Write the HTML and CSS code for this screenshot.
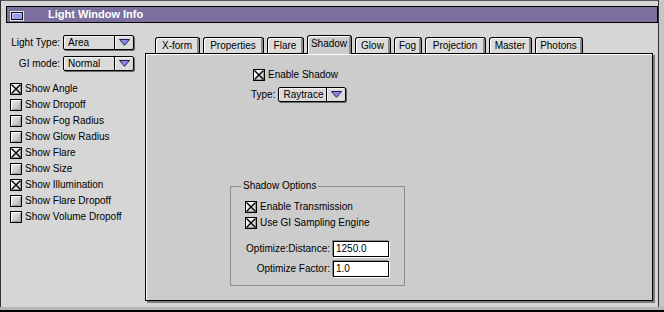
FILE: index.html
```html
<!DOCTYPE html>
<html>
<head>
<meta charset="utf-8">
<link rel="stylesheet" href="styles.css">
</head>
<body>
<div class="window">
  <div class="titlebar">
    <span class="closebox"></span>
    <span class="title">Light Window Info</span>
  </div>
  <div class="body">
    <aside class="sidebar">
      <div class="field-row">
        <span class="lbl">Light Type:</span>
        <div class="popup popup-side">
          <span class="popup-text">Area</span>
          <span class="popup-arrow"><svg width="11" height="7" viewBox="0 0 11 7"><polygon points="0.5,0.5 10.5,0.5 5.5,6.3" fill="#8a8ae6" stroke="#1c1c50" stroke-width="1"/></svg></span>
        </div>
      </div>
      <div class="field-row">
        <span class="lbl">GI mode:</span>
        <div class="popup popup-side">
          <span class="popup-text">Normal</span>
          <span class="popup-arrow"><svg width="11" height="7" viewBox="0 0 11 7"><polygon points="0.5,0.5 10.5,0.5 5.5,6.3" fill="#8a8ae6" stroke="#1c1c50" stroke-width="1"/></svg></span>
        </div>
      </div>
      <ul class="checks">
        <li class="check"><span class="cb on"><svg width="10" height="10" viewBox="0 0 10 10"><path d="M0.5 0.5L9.5 9.5M9.5 0.5L0.5 9.5" stroke="#000" stroke-width="1.4"/></svg></span>Show Angle</li>
        <li class="check"><span class="cb"></span>Show Dropoff</li>
        <li class="check"><span class="cb"></span>Show Fog Radius</li>
        <li class="check"><span class="cb"></span>Show Glow Radius</li>
        <li class="check"><span class="cb on"><svg width="10" height="10" viewBox="0 0 10 10"><path d="M0.5 0.5L9.5 9.5M9.5 0.5L0.5 9.5" stroke="#000" stroke-width="1.4"/></svg></span>Show Flare</li>
        <li class="check"><span class="cb"></span>Show Size</li>
        <li class="check"><span class="cb on"><svg width="10" height="10" viewBox="0 0 10 10"><path d="M0.5 0.5L9.5 9.5M9.5 0.5L0.5 9.5" stroke="#000" stroke-width="1.4"/></svg></span>Show Illumination</li>
        <li class="check"><span class="cb"></span>Show Flare Dropoff</li>
        <li class="check"><span class="cb"></span>Show Volume Dropoff</li>
      </ul>
    </aside>
    <section class="tabs-area">
      <div class="tabs">
        <div class="tab t-xform">X-form</div>
        <div class="tab t-props">Properties</div>
        <div class="tab t-flare">Flare</div>
        <div class="tab t-shadow active">Shadow</div>
        <div class="tab t-glow">Glow</div>
        <div class="tab t-fog">Fog</div>
        <div class="tab t-proj">Projection</div>
        <div class="tab t-master">Master</div>
        <div class="tab t-photons">Photons</div>
      </div>
      <div class="panel">
        <div class="check sh-check"><span class="cb on"><svg width="10" height="10" viewBox="0 0 10 10"><path d="M0.5 0.5L9.5 9.5M9.5 0.5L0.5 9.5" stroke="#000" stroke-width="1.4"/></svg></span>Enable Shadow</div>
        <div class="type-row">
          <span class="lbl">Type:</span>
          <div class="popup popup-type">
            <span class="popup-text">Raytrace</span>
            <span class="popup-arrow"><svg width="11" height="7" viewBox="0 0 11 7"><polygon points="0.5,0.5 10.5,0.5 5.5,6.3" fill="#8a8ae6" stroke="#1c1c50" stroke-width="1"/></svg></span>
          </div>
        </div>
        <fieldset class="group">
          <legend>Shadow Options</legend>
          <div class="check g-check g-first"><span class="cb on"><svg width="10" height="10" viewBox="0 0 10 10"><path d="M0.5 0.5L9.5 9.5M9.5 0.5L0.5 9.5" stroke="#000" stroke-width="1.4"/></svg></span>Enable Transmission</div>
          <div class="check g-check"><span class="cb on"><svg width="10" height="10" viewBox="0 0 10 10"><path d="M0.5 0.5L9.5 9.5M9.5 0.5L0.5 9.5" stroke="#000" stroke-width="1.4"/></svg></span>Use GI Sampling Engine</div>
          <div class="opt-row opt-first">
            <span class="lbl">Optimize:Distance:</span>
            <span class="textfield">1250.0</span>
          </div>
          <div class="opt-row">
            <span class="lbl">Optimize Factor:</span>
            <span class="textfield">1.0</span>
          </div>
        </fieldset>
      </div>
    </section>
  </div>
</div>
</body>
</html>
```

FILE: styles.css
```css
html, body {
  margin: 0;
  padding: 0;
  background: #d6d6d6;
}

body {
  font-family: "Liberation Sans", Arial, sans-serif;
  font-size: 10px;
  line-height: 12px;
  color: #000;
}

.window {
  width: 664px;
  height: 312px;
  box-sizing: border-box;
  background: #d6d6d6;
  display: flex;
  flex-direction: column;
  overflow: hidden;
  box-shadow:
    inset 0 -2px 0 #000,
    inset 0 -5px 0 #b6b6b6,
    inset -5px 0 0 #c6c6c6,
    inset -6px 0 0 #333,
    inset 1px 0 0 #333,
    inset 0 1px 0 #555;
}

/* title bar */
.titlebar {
  margin: 6px 6px 0 6px;
  height: 17px;
  box-sizing: border-box;
  border: 1px solid #000;
  background: #7a6f9f;
  display: flex;
  align-items: flex-start;
  flex: none;
}

.closebox {
  width: 12px;
  height: 8px;
  box-sizing: border-box;
  margin: 5px 0 0 4px;
  border: 1px solid #111;
  background: #9c9cf0;
  box-shadow: 0 0 0 1px #e4e4e4, inset 1px 1px 0 #c8c8ff;
}

.title {
  margin-left: 25px;
  color: #fff;
  font-weight: bold;
  font-size: 11px;
  line-height: 15px;
  white-space: nowrap;
}

/* body */
.body {
  display: flex;
  flex: 1;
}

.sidebar {
  width: 145px;
  flex: none;
  box-sizing: border-box;
  padding: 12px 0 0 10px;
}

.field-row {
  display: flex;
  align-items: center;
  height: 15px;
}

.field-row + .field-row {
  margin-top: 6px;
}

.field-row .lbl {
  width: 50px;
  margin-right: 3px;
  text-align: right;
  white-space: nowrap;
}

/* popup menus */
.popup {
  display: flex;
  height: 15px;
  box-sizing: border-box;
  border: 1px solid #000;
  border-radius: 2px;
  background: #dadada;
  box-shadow: inset 1px 1px 0 #f4f4f4, 1px 1px 0 #6a6a6a;
}

.popup-side {
  width: 71px;
}

.popup-type {
  width: 68px;
  margin-left: 3px;
}

.popup-text {
  flex: 1;
  padding-left: 4px;
  border-right: 1px solid #000;
  line-height: 13px;
  white-space: nowrap;
}

.popup-arrow {
  width: 18px;
  flex: none;
  display: flex;
  align-items: center;
  justify-content: center;
  box-shadow: inset 1px 0 0 #f4f4f4;
}

.popup-arrow svg {
  display: block;
}

/* checkboxes */
.checks {
  list-style: none;
  margin: 12px 0 0 0;
  padding: 0;
}

.check {
  display: flex;
  align-items: center;
  gap: 3px;
  height: 12px;
  margin-bottom: 4px;
  white-space: nowrap;
}

.cb {
  width: 12px;
  height: 12px;
  flex: none;
  box-sizing: border-box;
  border: 1px solid #000;
  background: linear-gradient(135deg, #f0f0f0 0%, #cdcdcd 55%, #a8a8a8 100%);
  box-shadow: inset 1px 1px 0 #fff, inset -1px -1px 0 #9a9a9a;
  display: flex;
  align-items: center;
  justify-content: center;
}

.cb.on {
  background: linear-gradient(135deg, #fafafa 0%, #dedede 60%, #bdbdbd 100%);
}

.cb svg {
  display: block;
}

/* tabs */
.tabs-area {
  flex: 1;
  padding: 12px 11px 0 0;
  min-width: 0;
}

.tabs {
  display: flex;
  align-items: flex-end;
  gap: 3px;
  height: 18px;
  padding-left: 10px;
}

.tab {
  height: 16px;
  box-sizing: border-box;
  border: 1px solid #000;
  border-bottom: 0;
  border-radius: 3px 3px 0 0;
  background: #dcdcdc;
  box-shadow: inset 1px 1px 0 #fff, inset -2px 0 0 #8a8a8a;
  display: flex;
  align-items: center;
  justify-content: center;
  padding-right: 1px;
  white-space: nowrap;
  flex: none;
}

.tab.active {
  height: 19px;
  margin-bottom: -1px;
  background: #cccccc;
  position: relative;
  z-index: 2;
  padding-bottom: 2px;
}

.t-xform { width: 45px; }
.t-props { width: 61px; }
.t-flare { width: 37px; }
.t-shadow { width: 45px; }
.t-glow { width: 36px; }
.t-fog { width: 28px; }
.t-proj { width: 61px; }
.t-master { width: 43px; }
.t-photons { width: 48px; }

/* panel */
.panel {
  height: 248px;
  box-sizing: border-box;
  border: 1px solid #000;
  background: #cccccc;
  box-shadow: inset 1px 1px 0 #fff, 2px 2px 0 #7c7c7c;
  padding-top: 15px;
  position: relative;
}

.sh-check {
  margin: 0 0 0 107px;
}

.type-row {
  display: flex;
  align-items: center;
  height: 15px;
  margin: 6px 0 0 105px;
}

.type-row .lbl {
  white-space: nowrap;
}

/* group box */
.group {
  width: 175px;
  height: 106px;
  box-sizing: border-box;
  margin: 78px 0 0 84px;
  padding: 0;
  border: 1px solid #8a8a8a;
  min-inline-size: 0;
}

.group legend {
  margin-left: 10px;
  padding: 0 2px;
  line-height: 12px;
}

.g-check {
  margin-left: 14px;
}

.g-first {
  margin-top: 9px;
}

.opt-row {
  display: flex;
  align-items: center;
  height: 16px;
  margin-top: 4px;
}

.opt-first {
  margin-top: 12px;
}

.opt-row .lbl {
  width: 99px;
  margin-right: 3px;
  text-align: right;
  white-space: nowrap;
}

.textfield {
  width: 56px;
  height: 16px;
  box-sizing: border-box;
  background: #fff;
  border: 1px solid #000;
  box-shadow: -1px -1px 0 #8a8a8a, 1px 1px 0 #fff;
  padding-left: 2px;
  line-height: 14px;
}
```
